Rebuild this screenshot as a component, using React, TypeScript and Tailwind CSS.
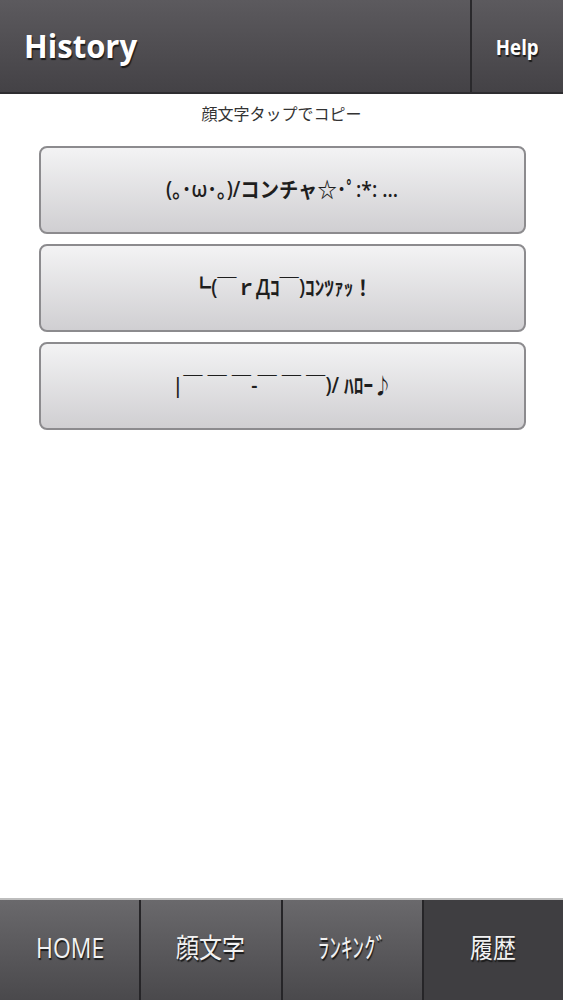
import React from "react";

const faces = [
  "(｡･ω･｡)/コンチャ☆･ﾟ:*: ...",
  "┗(￣ｒДｺ￣)ｺﾝﾂｧｯ！",
  "|￣ ￣ ￣-￣ ￣ ￣)/ ﾊﾛｰ♪\uFE0E",
];

const tabs = ["HOME", "顔文字", "ﾗﾝｷﾝｸﾞ", "履歴"];

const font = {
  fontFamily:
    '"Open Sans", "Noto Sans", "Noto Sans CJK JP", sans-serif',
};

export default function App() {
  return (
    <div className="flex h-[1000px] w-[563px] flex-col bg-white" style={font}>
      <header className="flex h-[94px] border-b-2 border-[#2e2d30] bg-gradient-to-b from-[#5c5a5e] to-[#444246]">
        <div className="flex flex-1 items-center border-r-2 border-[#2a292c] pl-6">
          <span className="inline-block origin-left scale-x-[0.97] text-[32px] font-bold text-white [text-shadow:1px_2px_1px_#1a1a1a]">
            History
          </span>
        </div>
        <div className="flex w-[91px] items-center justify-center">
          <span className="inline-block scale-x-[0.85] text-[22px] font-bold text-white [text-shadow:1px_2px_1px_#1a1a1a]">
            Help
          </span>
        </div>
      </header>

      <p className="mt-[10px] text-center text-[16px] leading-5 text-[#333]">
        顔文字タップでコピー
      </p>

      <div className="mt-[22px] flex flex-col gap-[10px] pl-[39px] pr-[37px]">
        {faces.map((f) => (
          <button
            key={f}
            className="flex h-[88px] items-center justify-center rounded-[8px] border-2 border-[#8c8b8e] bg-gradient-to-b from-[#f3f3f4] to-[#d0cfd2] text-[21px] font-semibold text-[#1e1e1e]"
          >
            <span className="inline-block scale-x-[0.92] whitespace-pre text-[#1e1e1e]">
              {f}
            </span>
          </button>
        ))}
      </div>

      <div className="flex-1" />

      <nav className="flex h-[102px] border-t-2 border-[#bdbdbd]">
        {tabs.map((t, i) => (
          <div
            key={t}
            className={
              i === 3
                ? "flex flex-1 items-center justify-center border-l-2 border-[#262528] bg-[#3f3e41] pb-1"
                : i === 0
                  ? "flex flex-1 items-center justify-center bg-gradient-to-b from-[#6a696c] to-[#4a494c] pb-1"
                  : "flex flex-1 items-center justify-center border-l-2 border-[#262528] bg-gradient-to-b from-[#6a696c] to-[#4a494c] pb-1"
            }
          >
            <span className="inline-block scale-x-[0.85] text-[27px] text-[#f2f2f2] [text-shadow:1px_2px_1px_#1a1a1a]">
              {t}
            </span>
          </div>
        ))}
      </nav>
    </div>
  );
}
